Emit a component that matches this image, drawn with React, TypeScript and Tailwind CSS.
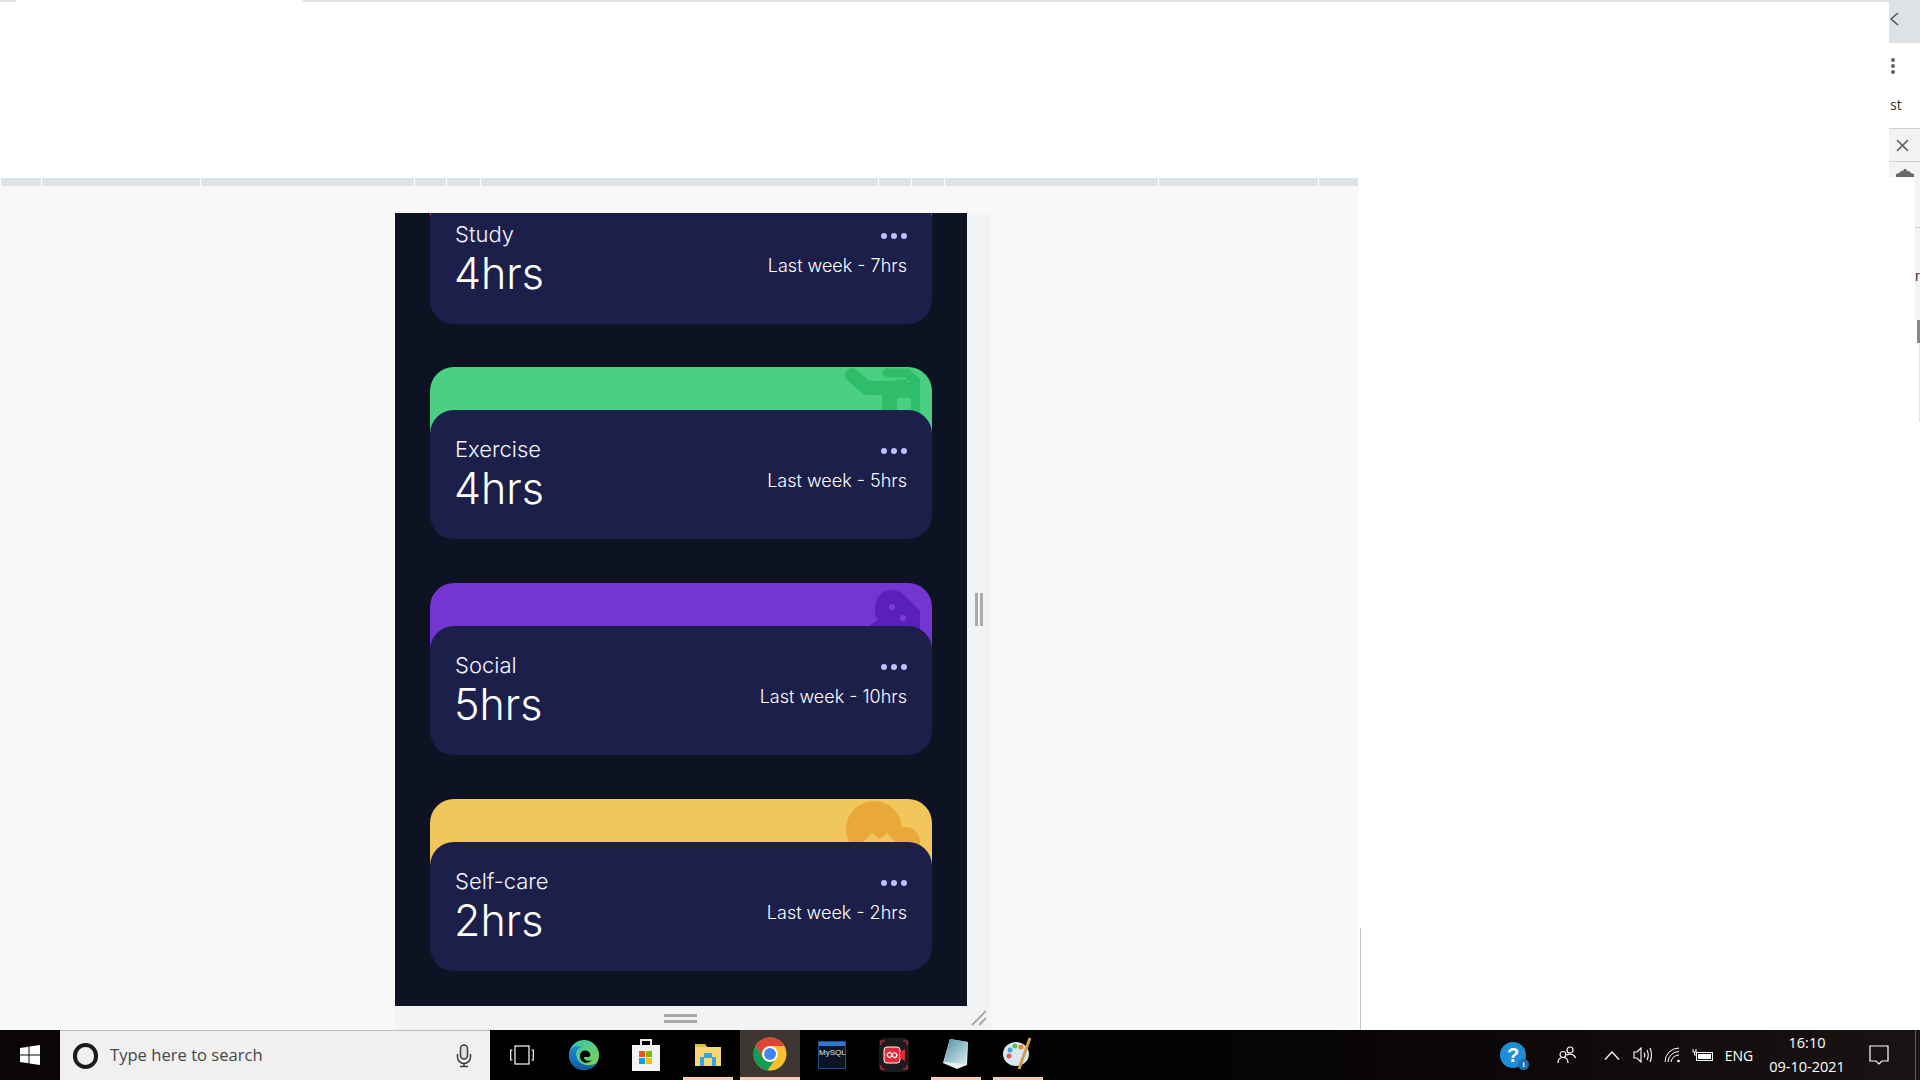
import React from 'react';

const ticks = [41, 159, 214, 32, 34, 398, 33, 33, 214, 160];

function ExerciseIcon() {
  return (
    <svg width="92" height="60" viewBox="840 367 92 60" className="absolute top-0 right-0">
      <path d="M852 375 L867 388 H890" fill="none" stroke="#2fbd69" strokeWidth="14" strokeLinecap="round" strokeLinejoin="round" />
      <path d="M887 373 H907 L915.5 381 V420" fill="none" stroke="#2fbd69" strokeWidth="9" strokeLinecap="round" strokeLinejoin="round" />
      <path d="M882 382 H920 V420 H911 V398 H897 V420 H882 Z" fill="#2fbd69" />
      <path d="M880 382 H905 Q910 381 908 379 L896 380 Z" fill="#2fbd69" />
    </svg>
  );
}

function SocialIcon() {
  return (
    <svg width="92" height="60" viewBox="840 583 92 60" className="absolute top-0 right-0">
      <path d="M875 607 A17 17 0 0 1 904 595 L920 611 V640 H860 L870 625 L878 620 A17 17 0 0 1 875 607 Z" fill="#5b1fbd" />
      <circle cx="892" cy="607" r="3" fill="#7b3fd8" />
      <circle cx="903" cy="618" r="3" fill="#7b3fd8" />
    </svg>
  );
}

function SelfCareIcon() {
  return (
    <svg width="92" height="60" viewBox="840 799 92 60" className="absolute top-0 right-0">
      <circle cx="874" cy="829" r="28" fill="#e8a93a" />
      <circle cx="905" cy="842" r="15" fill="#e8a93a" />
      <path d="M860 845 L872 833 L879 839 L887 833 L898 845 Z" fill="#f1c65b" />
    </svg>
  );
}

function Card({ title, hours, last, color, icon, className = '' }: { title: string; hours: string; last: string; color: string; icon?: React.ReactNode; className?: string }) {
  return (
    <div className={className}>
      <div className={`relative h-[70px] rounded-t-[24px] overflow-hidden ${color}`}>{icon}</div>
      <div className="relative -mt-[27px] h-[129px] rounded-[24px] bg-[#1c1f4a] px-[25px] pt-[24px] text-white font-['Inter',sans-serif]">
        <div className="flex items-center justify-between h-[30px]">
          <span className="text-[22px] font-light leading-[30px] text-[#f4f5ff]">{title}</span>
          <span className="flex gap-[4px] mt-[4px]">
            <i className="w-[6px] h-[6px] rounded-full bg-[#bbc0ff]" />
            <i className="w-[6px] h-[6px] rounded-full bg-[#bbc0ff]" />
            <i className="w-[6px] h-[6px] rounded-full bg-[#bbc0ff]" />
          </span>
        </div>
        <div className="flex items-center justify-between h-[50px] -mt-[1px]">
          <span className="text-[43px] font-light leading-[50px] -ml-[1px]">{hours}</span>
          <span className="text-[18px] font-light -mt-[15px]">{last}</span>
        </div>
      </div>
    </div>
  );
}

function Slot({ children, on, active }: { children: React.ReactNode; on?: boolean; active?: boolean }) {
  return (
    <div className="w-[62px] h-full flex justify-center">
      <div className={`h-full flex items-center justify-center ${active ? 'w-[60px] bg-[#3d3632]' : 'w-[50px]'} ${on || active ? 'border-b-[3px] border-[#f9cbb5]' : ''}`}>
        {children}
      </div>
    </div>
  );
}

export default function App() {
  return (
    <div className="w-[1920px] h-[1080px] flex flex-col overflow-hidden bg-white font-['Liberation_Sans',sans-serif]">
      <div className="h-[1030px] flex">
        {/* browser page */}
        <div className="w-[1889px] flex flex-col">
          <div className="h-[178px] flex flex-col shrink-0">
            <div className="h-[2px] flex">
              <div className="w-[16px] bg-[#dee1e6]" />
              <div className="w-[287px]" />
              <div className="flex-1 bg-[#dee1e6]" />
            </div>
          </div>
          <div className="flex flex-1 min-h-0">
            <div className="w-[1359px] flex flex-col">
              <div className="h-[8px] shrink-0 ml-[1px] mr-[1px] flex bg-[#dee1e6]">
                {ticks.map((w, i) => (
                  <div key={i} className="h-full border-r border-white" style={{ width: w }} />
                ))}
              </div>
              <div className="flex-1 min-h-0 bg-[#f9f9f9] flex pl-[395px]">
                <div className="w-[596px] mt-[27px] flex flex-col bg-[#f2f3f5]">
                  <div className="flex flex-1 min-h-0">
                    <div className="w-[572px] bg-[#0e1323] overflow-hidden px-[35px]">
                      <Card className="-mt-[61px]" title="Study" hours="4hrs" last="Last week - 7hrs" color="bg-[#ff5e7d]" />
                      <Card className="mt-[43px]" title="Exercise" hours="4hrs" last="Last week - 5hrs" color="bg-[#4bcf82]" icon={<ExerciseIcon />} />
                      <Card className="mt-[44px]" title="Social" hours="5hrs" last="Last week - 10hrs" color="bg-[#7535d0]" icon={<SocialIcon />} />
                      <Card className="mt-[44px]" title="Self-care" hours="2hrs" last="Last week - 2hrs" color="bg-[#f1c65b]" icon={<SelfCareIcon />} />
                    </div>
                    <div className="flex-1 flex items-center justify-center gap-[2px]">
                      <div className="w-[3px] h-[33px] bg-[#a9a9a9]" />
                      <div className="w-[3px] h-[33px] bg-[#a9a9a9]" />
                    </div>
                  </div>
                  <div className="h-[24px] shrink-0 flex items-center justify-between pl-[269px] pr-[4px]">
                    <div className="flex flex-col gap-[3px]">
                      <div className="w-[33px] h-[3px] bg-[#a9a9a9]" />
                      <div className="w-[33px] h-[3px] bg-[#a9a9a9]" />
                    </div>
                    <svg width="16" height="16" viewBox="0 0 16 16">
                      <path d="M1 15 L15 1 M8 15 L15 8" stroke="#a9a9a9" strokeWidth="2" />
                    </svg>
                  </div>
                </div>
              </div>
            </div>
            <div className="flex-1 flex flex-col justify-end">
              <div className="h-[102px] w-[3px] ml-[1px] border-l border-[#c4c4c4]" />
            </div>
          </div>
        </div>
        {/* devtools strip */}
        <div className="w-[31px] flex flex-col shrink-0">
          <div className="h-[177px] shrink-0 flex flex-col bg-white text-[#5f6368]">
            <div className="h-[2px] bg-[#dee1e6]" />
            <div className="h-[41px] bg-[#dee1e6] flex items-start pt-[10px]">
              <svg width="10" height="14" viewBox="0 0 10 14">
                <path d="M9 1 L2 7 L9 13" fill="none" stroke="#45474a" strokeWidth="1.3" />
              </svg>
            </div>
            <div className="h-[38px] pl-[2px] pt-[15px] flex flex-col items-start gap-[2px]">
              <i className="w-[4px] h-[4px] rounded-full bg-[#5f6368]" />
              <i className="w-[4px] h-[4px] rounded-full bg-[#5f6368]" />
              <i className="w-[4px] h-[4px] rounded-full bg-[#5f6368]" />
            </div>
            <div className="h-[47px] flex items-center text-[14px] text-[#333] pl-[1px] leading-none font-['Open_Sans',sans-serif]">st</div>
            <div className="h-[34px] bg-[#f1f3f4] border-y border-[#cfcfcf] flex items-center pl-[7px]">
              <svg width="13" height="13" viewBox="0 0 12 12">
                <path d="M1 1 L11 11 M11 1 L1 11" stroke="#6a6a6a" strokeWidth="1.6" />
              </svg>
            </div>
            <div className="flex-1 bg-[#f1f3f4] flex justify-center overflow-hidden">
              <svg className="mt-[7px]" width="18" height="8" viewBox="0 0 18 8">
                <path d="M0 8 V5 L3 4 L5 2 H7 L8 0 H10 L11 2 H13 L15 4 L18 5 V8 Z" fill="#6a6a6a" />
              </svg>
            </div>
          </div>
          <div className="flex flex-1 min-h-0">
            <div className="w-[26px] bg-white" />
            <div className="w-[5px] flex flex-col">
              <div className="h-[143px] bg-[#f1f3f4] flex flex-col">
                <div className="h-[51px] border-b border-[#cfcfcf]" />
                <div className="h-[48px] pt-[41px] text-[14px] leading-none text-[#333]">r</div>
              </div>
              <div className="h-[23px] pl-[2px]">
                <div className="h-full bg-[#8a8a8a]" />
              </div>
              <div className="flex-1 pl-[4px]">
                <div className="h-[78px] border-b border-[#cfcfcf] bg-[#dbe7f3]" />
              </div>
            </div>
          </div>
        </div>
      </div>

      {/* windows taskbar */}
      <div className="h-[50px] flex bg-gradient-to-r from-[#000000] via-[#020101] to-[#191413] text-white">
        <div className="w-[60px] flex items-center justify-center bg-[#0a0606]">
          <svg width="20" height="20" viewBox="0 0 20 20" fill="#fff">
            <path d="M0 3 L8.5 1.7 V9.5 H0 Z M9.5 1.5 L20 0 V9.5 H9.5 Z M0 10.5 H8.5 V18.3 L0 17 Z M9.5 10.5 H20 V20 L9.5 18.5 Z" />
          </svg>
        </div>
        <div className="w-[430px] mr-[1px] bg-[#f0f0f0] border-t border-[#bdbdbd] flex items-center">
          <div className="w-[50px] flex justify-center">
            <div className="w-[25px] h-[26px] rounded-full border-[4px] border-[#1b1b1b]" />
          </div>
          <span className="text-[16.6px] text-[#474747] font-['Open_Sans',sans-serif]">Type here to search</span>
          <svg className="ml-auto mr-[18px]" width="16" height="24" viewBox="0 0 16 24" fill="none" stroke="#3a3a3a" strokeWidth="1.5">
            <rect x="4.5" y="1" width="7" height="14" rx="3.5" fill="#e0e0e0" />
            <path d="M1.5 10 V13 A6 6 0 0 0 14.5 13 V10 M8 19 V22 M4 22.5 H12" />
          </svg>
        </div>
        <Slot>
          <svg width="24" height="20" viewBox="0 0 24 20" fill="none" stroke="#fff" strokeWidth="1.2">
            <rect x="5" y="1" width="14" height="18" />
            <path d="M2.5 5 H0.7 V15 H2.5 M21.5 5 H23.3 V15 H21.5" />
          </svg>
        </Slot>
        <Slot>
          <svg width="32" height="32" viewBox="0 0 32 32">
            <defs>
              <linearGradient id="edge1" x1="0" y1="0" x2="1" y2="1">
                <stop offset="0" stopColor="#35c1b0" />
                <stop offset="1" stopColor="#7fd84f" />
              </linearGradient>
              <linearGradient id="edge2" x1="0" y1="0" x2="0" y2="1">
                <stop offset="0" stopColor="#1b8fd4" />
                <stop offset="1" stopColor="#0c5aa6" />
              </linearGradient>
            </defs>
            <circle cx="16" cy="16" r="15" fill="url(#edge1)" />
            <path d="M1 16 C1 8 8 6 14 8 C8 10 7 14 9 19 C12 27 22 28 28 24 C24 30 19 31 16 31 C8 31 1 25 1 16 Z" fill="url(#edge2)" />
            <path d="M12 17 C12 12 17 10 21 13 C23 15 23 18 20 18 C18 18 16 17 16 19 C16 21 20 23 24 21 C20 26 12 24 12 17 Z" fill="#000" />
          </svg>
        </Slot>
        <Slot>
          <svg width="30" height="36" viewBox="0 0 30 36">
            <path d="M10 8 V3 H20 V8" fill="none" stroke="#e8e8e8" strokeWidth="2" />
            <rect x="1" y="8" width="28" height="26" fill="#f2f2f2" />
            <rect x="8" y="14" width="6" height="6" fill="#f25022" />
            <rect x="15" y="14" width="6" height="6" fill="#7fba00" />
            <rect x="8" y="21" width="6" height="6" fill="#00a4ef" />
            <rect x="15" y="21" width="6" height="6" fill="#ffb900" />
          </svg>
        </Slot>
        <Slot on>
          <svg width="28" height="28" viewBox="0 0 28 28">
            <path d="M1 4 H11 L13 7 H27 V26 H1 Z" fill="#f8d775" />
            <path d="M1 4 H11 L13 7 H1 Z" fill="#e8b93c" />
            <path d="M6 26 V17 H10 V13 H18 V17 H22 V26 H18 V18 H10 V26 Z" fill="#3aa7d8" />
          </svg>
        </Slot>
        <Slot active>
          <svg width="34" height="34" viewBox="0 0 34 34">
            <circle cx="17" cy="17" r="16.5" fill="#fbc02d" />
            <path d="M17 .5 A16.5 16.5 0 0 0 2.7 8.8 L10 21 A8 8 0 0 1 17 9 H31.3 A16.5 16.5 0 0 0 17 .5 Z" fill="#db4437" />
            <path d="M2.7 8.8 A16.5 16.5 0 0 0 14.5 33.3 L21.5 23.5 A8 8 0 0 1 10 21 Z" fill="#0f9d58" />
            <circle cx="17" cy="17" r="7.8" fill="#fff" />
            <circle cx="17" cy="17" r="6" fill="#4285f4" />
          </svg>
        </Slot>
        <Slot>
          <div className="w-[28px] h-[28px] bg-[#0b1526] border border-[#1d4e8f] flex flex-col">
            <div className="h-[4px] bg-[#2f78d0]" />
            <span className="text-[8px] leading-[14px] text-[#e4e4e4]">MySQL</span>
          </div>
        </Slot>
        <Slot>
          <svg width="30" height="34" viewBox="0 0 30 34">
            <rect width="30" height="34" rx="5" fill="#1c1c1e" />
            <path d="M2 7 V3 H6 M24 3 H28 V7 M2 27 V31 H6 M24 31 H28 V27" fill="none" stroke="#e02b3c" strokeWidth="1.2" />
            <rect x="5" y="9" width="16" height="16" rx="3" fill="#e02b3c" stroke="#fff" strokeWidth="1" />
            <path d="M21 14 L26 11 V23 L21 20 Z" fill="#e02b3c" />
            <path d="M8 17 C10 13 12 14 13 17 C14 20 17 21 18 17 C17 14 14 14 13 17 C12 20 10 21 8 17 Z" fill="none" stroke="#fff" strokeWidth="1.2" />
          </svg>
        </Slot>
        <Slot on>
          <svg width="30" height="34" viewBox="0 0 30 34">
            <defs>
              <linearGradient id="pad1" x1="0" y1="0" x2="1" y2="1">
                <stop offset="0" stopColor="#4f8fa3" />
                <stop offset="1" stopColor="#d8eef2" />
              </linearGradient>
            </defs>
            <path d="M9 2 L27 5 L26 28 L16 32 L2 26 Z" fill="#e9f2f3" />
            <path d="M9 2 L27 5 L25 27 L3 25 Z" fill="url(#pad1)" />
          </svg>
        </Slot>
        <Slot on>
          <svg width="32" height="36" viewBox="0 0 32 36">
            <ellipse cx="14" cy="18" rx="13" ry="12" fill="#d9e6ee" />
            <circle cx="8" cy="14" r="2.5" fill="#3aa7d8" />
            <circle cx="13" cy="10" r="2.5" fill="#6abf4b" />
            <circle cx="19" cy="11" r="2.5" fill="#e0863a" />
            <circle cx="7" cy="20" r="2.5" fill="#e05a5a" />
            <path d="M28 2 L17 33" stroke="#d39a4a" strokeWidth="3" />
          </svg>
        </Slot>

        <div className="ml-auto flex h-full items-center">
          <div className="w-[50px] flex justify-center">
            <div className="relative w-[26px] h-[26px] rounded-full bg-[#1d8fd6] flex items-center justify-center text-white font-bold text-[20px] leading-none">
              ?
              <span className="absolute -right-[3px] -bottom-[2px] w-[11px] h-[11px] rounded-full bg-[#1d6fb0] text-[8px] leading-[11px] text-center">i</span>
            </div>
          </div>
          <div className="w-[58px] flex justify-center">
            <svg width="20" height="18" viewBox="0 0 20 18" fill="none" stroke="#fff" strokeWidth="1.2">
              <circle cx="13" cy="4" r="3" />
              <circle cx="6" cy="8.5" r="3" />
              <path d="M1 17 C1 13 3 11.5 6 11.5 C9 11.5 11 13 11 17 M10 9 C12 7.5 17 7.5 18.5 12" />
            </svg>
          </div>
          <div className="w-[32px] flex justify-center">
            <svg width="16" height="9" viewBox="0 0 16 9" fill="none" stroke="#fff" strokeWidth="1.2">
              <path d="M1 8.5 L8 1 L15 8.5" />
            </svg>
          </div>
          <div className="w-[29px] flex justify-center">
            <svg width="20" height="16" viewBox="0 0 20 16" fill="none" stroke="#fff" strokeWidth="1.1">
              <path d="M1 5 H4 L8 1 V15 L4 11 H1 Z M11 5.5 Q12.5 8 11 10.5 M14 3 Q16.5 8 14 13 M17 1 Q20 8 17 15" />
            </svg>
          </div>
          <div className="w-[31px] flex justify-center">
            <svg width="18" height="16" viewBox="0 0 18 16" fill="none" stroke="#fff" strokeWidth="1">
              <path d="M1 15 A14 14 0 0 1 15 1 M4 15 A11 11 0 0 1 15 4.5 M7 15 A8 8 0 0 1 15 8" />
              <circle cx="14.5" cy="14" r="1.3" fill="#fff" stroke="none" />
            </svg>
          </div>
          <div className="w-[29px] flex justify-center">
            <svg width="22" height="14" viewBox="0 0 22 14" fill="none" stroke="#fff" strokeWidth="1">
              <rect x="4.5" y="4.5" width="16" height="8" />
              <rect x="6" y="6" width="13" height="5" fill="#fff" stroke="none" />
              <path d="M1 1 V4 H4 V1 M2.5 4 V7 H4.5" />
            </svg>
          </div>
          <div className="w-[44px] text-center text-[14px] text-white font-['Open_Sans',sans-serif]">ENG</div>
          <div className="w-[92px] text-center text-[14.5px] leading-[24px] text-white font-['Open_Sans',sans-serif]">
            <div>16:10</div>
            <div>09-10-2021</div>
          </div>
          <div className="w-[52px] flex justify-center">
            <svg width="20" height="20" viewBox="0 0 20 20" fill="none" stroke="#fff" strokeWidth="1.2">
              <path d="M1 1 H19 V16 H13 L10 19 L7 16 H1 Z" />
            </svg>
          </div>
          <div className="w-[10px]" />
          <div className="w-[5px] h-full border-l border-[#5a5a5a]" />
        </div>
      </div>
    </div>
  );
}
